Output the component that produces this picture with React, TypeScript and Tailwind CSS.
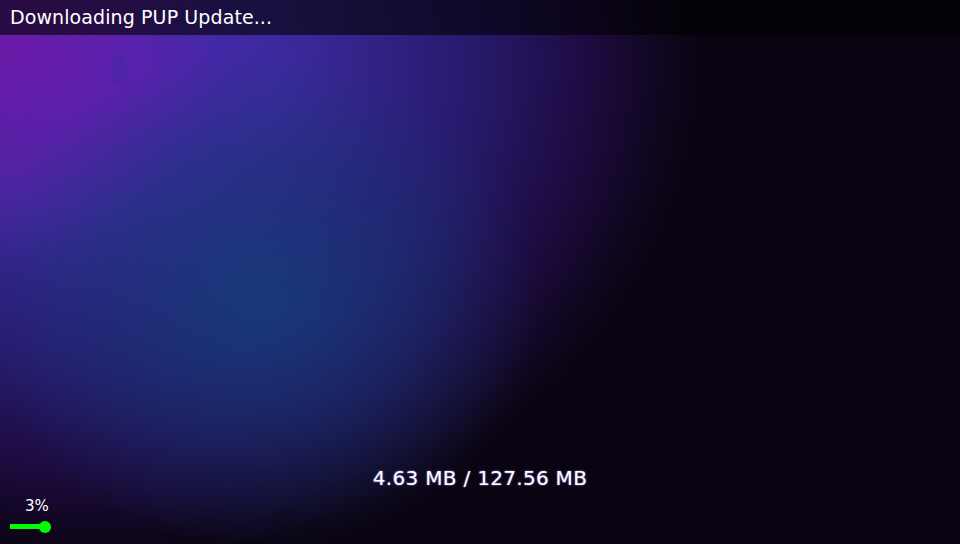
export default function App() {
  const done = 4.63;
  const total = 127.56;
  const pct = Math.floor((done / total) * 100);

  return (
    <div className="relative w-[960px] h-[544px] overflow-hidden bg-[#0a0412] bg-[radial-gradient(ellipse_280px_250px_at_260px_300px,rgba(22,58,122,0.95)_0%,rgba(24,52,116,0.5)_55%,rgba(24,52,116,0)_100%),radial-gradient(circle_220px_at_0px_40px,#6c1aa8_0%,rgba(100,26,168,0)_100%),radial-gradient(ellipse_600px_500px_at_100px_60px,#5026b2_0%,#3c2a9e_30%,#271a6c_62%,#1e0c44_80%,#10061f_94%,rgba(10,4,18,0)_100%)] font-['DejaVu_Sans',sans-serif] text-white">
      {/* faint sprite smudge in the glow */}
      <span className="absolute left-[111px] top-[55px] w-[16px] h-[28px] rounded-[40%] bg-[#3a2aa0]/40 blur-[1px]" />

      <div className="relative flex flex-col h-full">
        <header className="h-[35px] flex items-center px-[10px] bg-black/60">
          <span className="text-[19px] tracking-[0.1px]">Downloading PUP Update...</span>
        </header>

        <main className="flex-1 flex flex-col justify-end">
          <div className="text-center text-[20px] tracking-[0.3px] text-white [text-shadow:0_0_2px_#9d8cff] mb-[6px]">
            {done.toFixed(2)} MB / {total.toFixed(2)} MB
          </div>
          <div className="pl-[10px] pb-[15px] w-[60px]">
            <div className="text-[15px] pl-[15px] leading-none mb-[10px]">{pct}%</div>
            <div className="relative w-[40px] h-[5px] bg-[#00ff00]">
              <span className="absolute right-[-1px] top-1/2 -translate-y-1/2 w-[12px] h-[12px] rounded-full bg-[#00ff00]" />
            </div>
          </div>
        </main>
      </div>
    </div>
  );
}
